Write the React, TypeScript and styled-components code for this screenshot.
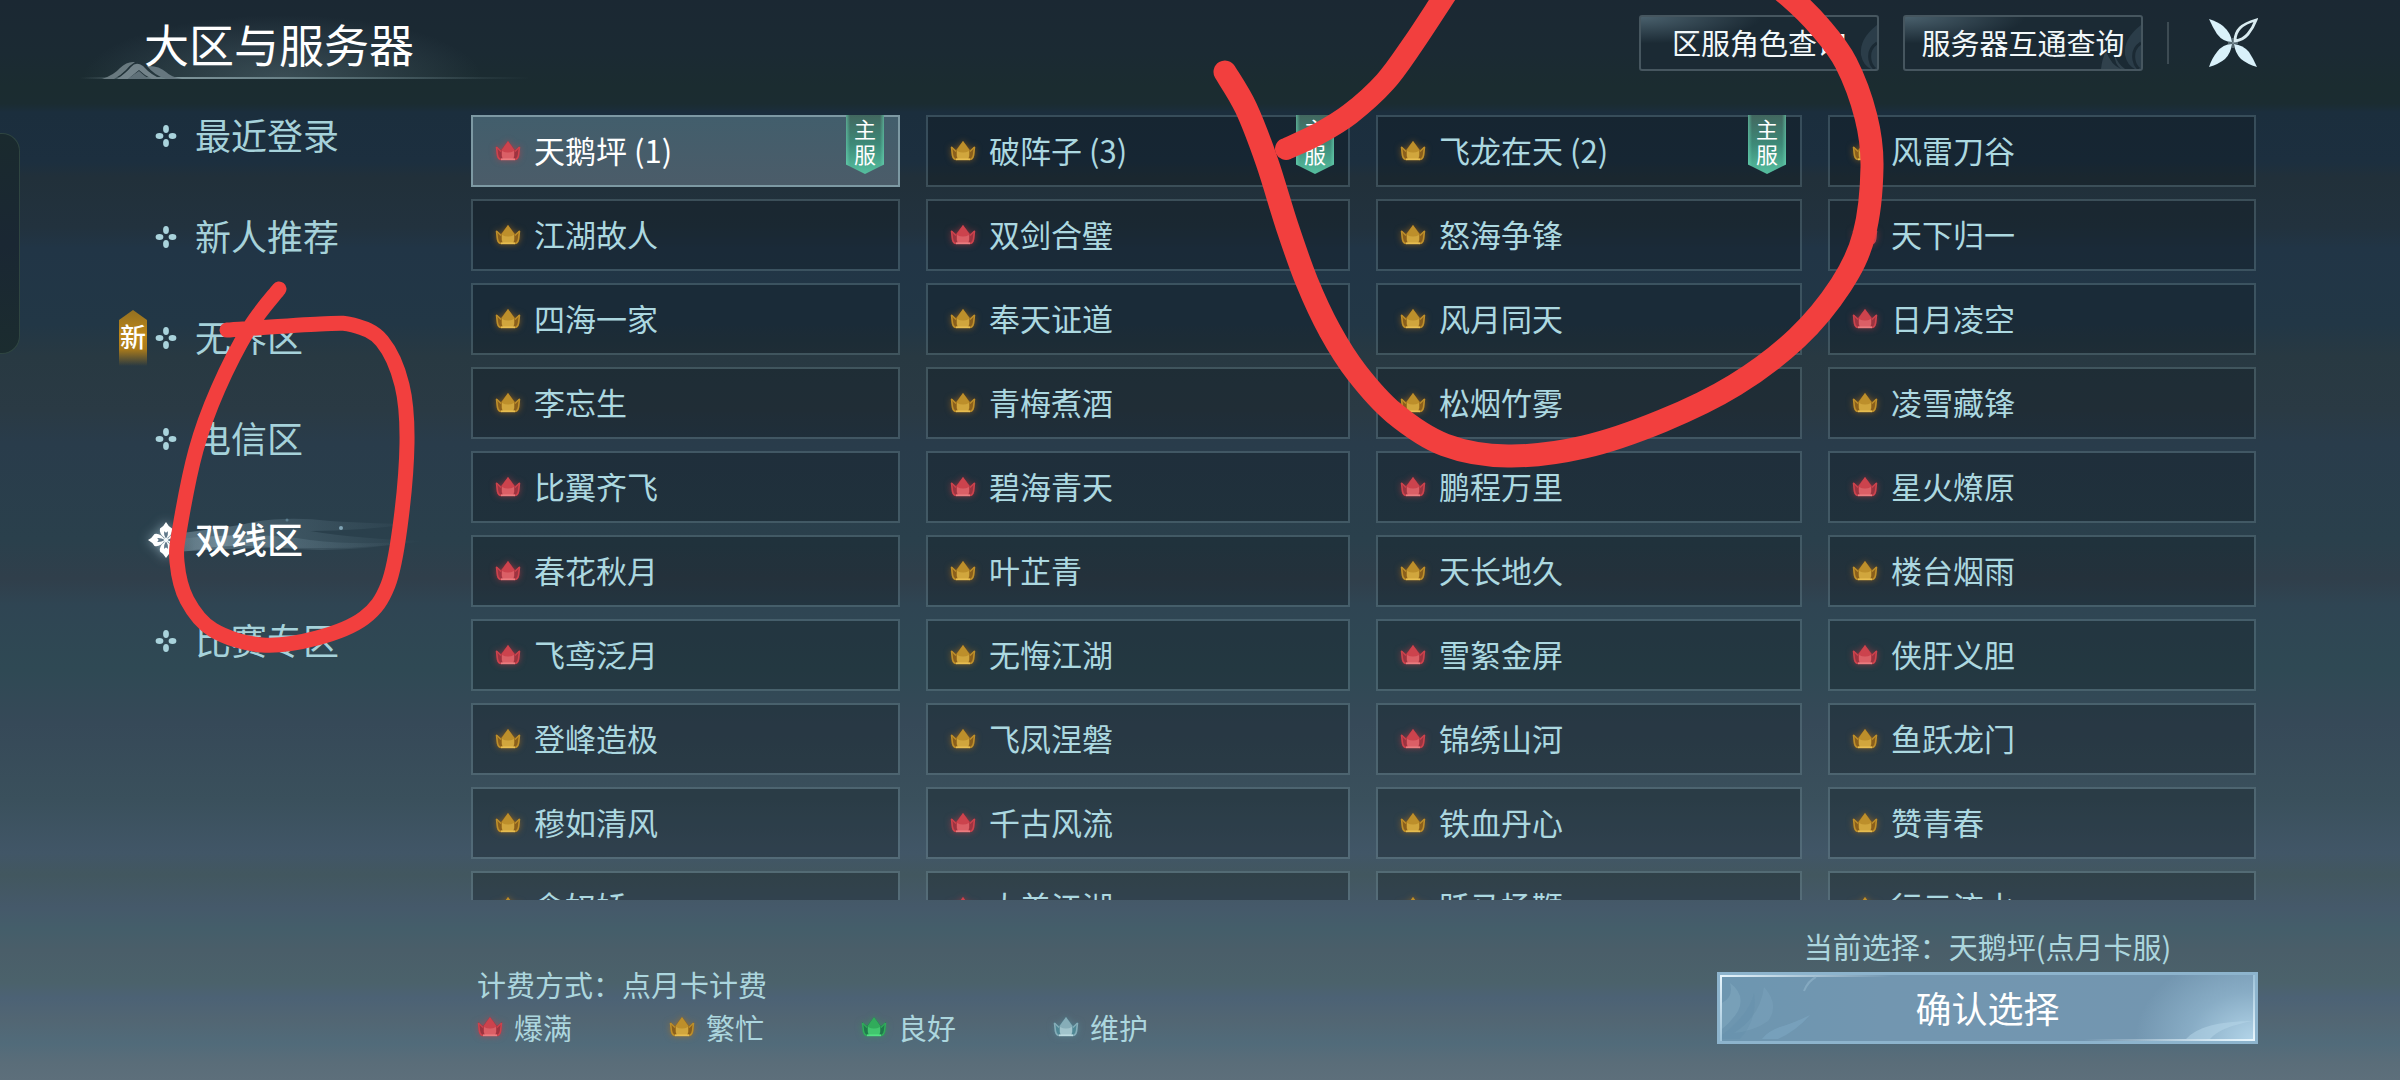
import React, { useState } from 'react';
import styled, { createGlobalStyle, css } from 'styled-components';

const GlobalStyle = createGlobalStyle`
  *, *::before, *::after { box-sizing: border-box; }
  body {
    margin: 0;
    background: #2a3c48;
    font-family: "Noto Sans CJK SC", "Noto Sans", sans-serif;
    color: #acd6de;
  }
  button { font-family: inherit; cursor: pointer; }
`;

const Page = styled.div`
  position: relative;
  display: flex;
  flex-direction: column;
  height: 100vh;
  min-height: 720px;
  overflow: hidden;
  background: linear-gradient(
    180deg,
    #1b2833 0%, #1b2a33 5%, #1b2c30 8%, #1b2c31 9.6%, #1b2e3d 10.4%, #1c2f3f 15%,
    #21303a 16.4%, #22323e 21%, #213546 23%, #223746 30%, #283942 33%, #2a3a44 38%,
    #293c4b 41%, #2a404c 50%, #303f4b 53.6%, #2f4553 56%, #2f4954 62%, #364958 67%,
    #3a505c 74%, #415667 79%, #42575f 81%, #45596a 84%, #445e6a 86%, #4a5e69 88%,
    #4b626b 91%, #4c6275 92.4%, #526673 94.4%, #516b7a 96.6%, #5a6d79 98.4%, #5d6f7b 100%
  );
`;

const Header = styled.header`
  display: flex;
  flex: none;
  justify-content: space-between;
  align-items: flex-start;
  height: 85px;
  padding: 12px 142px 0 80px;
`;

const TitleBlock = styled.div`
  position: relative;
  width: 450px;
  padding: 0 0 3px 64px;
  background:
    linear-gradient(90deg, transparent, rgba(170, 195, 200, 0.65) 22%, rgba(150, 180, 185, 0.4) 55%, transparent) left bottom / 100% 2px no-repeat,
    radial-gradient(200px 64px at 45% 100%, rgba(110, 135, 145, 0.38), transparent);
`;

const Mountains = styled.svg`
  position: absolute;
  left: 22px;
  bottom: 0;
  width: 80px;
  height: 18px;
`;

const Title = styled.h1`
  position: relative;
  margin: 0;
  font-size: 45px;
  line-height: 64px;
  font-weight: 400;
  color: #fff;
  white-space: nowrap;
`;

const Actions = styled.div`
  display: flex;
  align-items: center;
  gap: 24px;
  padding-top: 3px;
`;

const QueryButton = styled.button`
  position: relative;
  width: 240px;
  height: 56px;
  padding: 0 0 3px;
  border: 2px solid #46565f;
  border-radius: 3px;
  background:
    radial-gradient(ellipse at 0 0, rgba(120, 150, 165, 0.5), transparent 36%),
    #1b2a34;
  color: #f2f8fa;
  font-size: 29px;
  line-height: 44px;
  white-space: nowrap;
`;

const ButtonLabel = styled.span`
  position: relative;
`;

const CornerWaves = styled.svg`
  position: absolute;
  right: 0;
  bottom: 0;
  width: 40px;
  height: 52px;
`;

const Divider = styled.span`
  width: 2px;
  height: 42px;
  background: #3d4b53;
`;

const CloseButton = styled.button`
  display: block;
  width: 50px;
  height: 50px;
  margin-left: 15px;
  padding: 0;
  border: 0;
  background: none;
  svg { display: block; width: 50px; height: 50px; }
`;

const Body = styled.div`
  display: flex;
  flex: 1;
  min-height: 0;
`;

const Sidebar = styled.nav`
  flex: none;
  width: 471px;
`;

const RegionButton = styled.button<{ $active: boolean }>`
  position: relative;
  display: flex;
  align-items: center;
  gap: 11px;
  width: 100%;
  height: 101px;
  padding: 0 0 0 148px;
  border: 0;
  background: none;
  color: ${(p) => (p.$active ? '#ffffff' : '#a6d2da')};
  font-size: 36px;
  line-height: 52px;
  font-weight: ${(p) => (p.$active ? 500 : 400)};
  white-space: nowrap;
`;

const FlowerSlot = styled.span<{ $active: boolean }>`
  position: relative;
  display: flex;
  justify-content: center;
  width: 36px;
  svg {
    display: block;
    width: ${(p) => (p.$active ? 36 : 22)}px;
    height: ${(p) => (p.$active ? 36 : 22)}px;
    overflow: visible;
  }
  ${(p) => p.$active && css`filter: drop-shadow(0 0 6px rgba(190, 220, 235, 0.6));`}
`;

const Swoosh = styled.svg`
  position: absolute;
  left: 140px;
  top: 24px;
  width: 285px;
  height: 56px;
`;

const NewTag = styled.span`
  position: absolute;
  left: 119px;
  top: 23px;
  width: 28px;
  height: 56px;
  padding-top: 8px;
  color: #fff;
  font-size: 26px;
  line-height: 36px;
  font-weight: 500;
  text-align: center;
  &::before {
    content: "";
    position: absolute;
    inset: 0;
    z-index: -1;
    clip-path: polygon(50% 0, 100% 18%, 100% 100%, 0 100%, 0 18%);
    background: linear-gradient(180deg, #937022, #bd8719 45%, #a97a1b 70%, rgba(150, 110, 30, 0));
  }
  isolation: isolate;
`;

const RegionName = styled.span`
  position: relative;
  padding-bottom: 4px;
`;

const ServerList = styled.main`
  display: grid;
  flex: 1;
  grid-template-columns: 429fr 424fr 426fr 428fr;
  grid-auto-rows: 72px;
  gap: 12px 26px;
  margin-right: 144px;
  padding-top: 30px;
  overflow: hidden;
`;

const ServerCard = styled.button<{ $selected: boolean }>`
  position: relative;
  display: flex;
  align-items: center;
  gap: 13px;
  min-width: 0;
  padding: 0 0 0 22px;
  border: 2px solid ${(p) => (p.$selected ? '#7d99a3' : 'rgba(135, 165, 175, 0.26)')};
  background: ${(p) => (p.$selected ? 'linear-gradient(180deg, #425e6c, #4b5c69)' : 'rgba(12, 22, 27, 0.33)')};
  background-clip: padding-box;
  color: ${(p) => (p.$selected ? '#ffffff' : '#acd8e0')};
  font-size: 31px;
  line-height: 44px;
  text-align: left;
  white-space: nowrap;
`;

const ServerName = styled.span`
  padding-bottom: 3px;
`;

const MainTag = styled.span`
  position: absolute;
  right: 14px;
  top: -2px;
  width: 38px;
  height: 59px;
  padding: 1px 8px 0;
  isolation: isolate;
  color: #fff;
  font-size: 22px;
  line-height: 25px;
  white-space: normal;
  &::before {
    content: "";
    position: absolute;
    inset: 0;
    z-index: -1;
    clip-path: polygon(0 0, 100% 0, 100% 84%, 50% 100%, 0 84%);
    background:
      linear-gradient(90deg, rgba(110, 220, 185, 0.55), transparent 4px calc(100% - 4px), rgba(110, 220, 185, 0.55)),
      linear-gradient(180deg, #42675f, #3d8a78 50%, #56bf9f);
  }
`;

const CrownSvg = styled.svg<{ $glow: string }>`
  display: block;
  flex: none;
  width: 26px;
  height: 20px;
  overflow: visible;
  filter: drop-shadow(0 0 3px ${(p) => p.$glow});
`;

const Footer = styled.footer`
  display: flex;
  flex: none;
  justify-content: space-between;
  align-items: flex-end;
  height: 180px;
  padding: 0 142px 36px 477px;
  font-size: 29px;
  line-height: 32px;
`;

const Billing = styled.div`
  display: flex;
  flex-direction: column;
  gap: 11px;
  padding-bottom: 1px;
`;

const Plain = styled.p`
  margin: 0;
  white-space: nowrap;
`;

const Legend = styled.ul`
  display: grid;
  grid-template-columns: repeat(4, 192px);
  margin: 0;
  padding: 0;
  list-style: none;
`;

const LegendItem = styled.li`
  display: flex;
  align-items: center;
  gap: 11px;
`;

const Confirm = styled.div`
  display: flex;
  flex-direction: column;
  align-items: center;
  gap: 10px;
`;

const ConfirmButton = styled.button`
  position: relative;
  width: 541px;
  height: 72px;
  padding: 0 0 3px;
  border: 3px solid #8db4cd;
  background:
    linear-gradient(90deg, #e8f6fd, transparent 32%) left top / 100% 2px no-repeat,
    linear-gradient(270deg, #e8f6fd, transparent 32%) left bottom / 100% 2px no-repeat,
    linear-gradient(180deg, #e8f6fd, #9ec3d9) left top / 2px 100% no-repeat,
    linear-gradient(0deg, #e8f6fd, #9ec3d9) right top / 2px 100% no-repeat,
    radial-gradient(120px 90px at 100% 100%, #b4d6ea, rgba(150, 187, 211, 0.6) 55%, transparent),
    linear-gradient(90deg, #6d96b0, #7296b0 30%, #7396b0);
  color: #fff;
  font-size: 36px;
  line-height: 60px;
`;

const ConfirmArt = styled.svg`
  position: absolute;
  left: 0;
  top: 0;
  width: 100%;
  height: 100%;
`;

const EdgePanel = styled.div`
  position: absolute;
  left: 0;
  top: 133px;
  width: 20px;
  height: 221px;
  border: 1px solid #2f4541;
  border-left: 0;
  border-radius: 0 18px 18px 0;
  background: linear-gradient(180deg, #1a2a2e, #1a2733 50%, #1b2c2f);
`;

const MarkerLayer = styled.svg`
  position: absolute;
  left: 0;
  top: 0;
  width: 100%;
  height: 100%;
  pointer-events: none;
`;

type Load = 'full' | 'busy' | 'good' | 'down';

const LOAD_COLORS: Record<Load, { dark: string; mid: string; light: string; glow: string }> = {
  full: { dark: '#9c3440', mid: '#cc434d', light: '#ea7c7f', glow: 'rgba(205, 60, 70, 0.55)' },
  busy: { dark: '#8a5f1c', mid: '#bd8f2b', light: '#e6bd50', glow: 'rgba(180, 115, 25, 0.6)' },
  good: { dark: '#20794c', mid: '#31ab5b', light: '#52e182', glow: 'rgba(45, 160, 90, 0.55)' },
  down: { dark: '#4f8794', mid: '#86adb8', light: '#bcdbe0', glow: 'rgba(90, 150, 165, 0.5)' },
};

function Crown({ load }: { load: Load }) {
  const c = LOAD_COLORS[load];
  return (
    <CrownSvg viewBox="0 0 26 20" $glow={c.glow} aria-hidden="true">
      <path d="M1 5L2 15Q3 19 6 19H20Q23 19 24 15L25 5L20 9L13 0L6 9Z" fill={c.dark} />
      <path d="M13 0L19.500 9Q20 15 18 19H8Q6 15 6.500 9Z" fill={c.mid} />
      <path d="M7 10Q13 13 19 10Q19.500 15 18 19H8Q6.500 15 7 10Z" fill={c.light} opacity="0.5" />
      <path d="M1.500 6L2.500 14.500Q3.500 18.500 6.500 18.500M24.500 6L23.500 14.500Q22.500 18.500 19.500 18.500" fill="none" stroke={c.mid} strokeWidth="1.600" />
      <path d="M1.500 6L6 10.500M24.500 6L20 10.500" fill="none" stroke={c.mid} strokeWidth="1.200" />
      <path d="M6 18.300H20" stroke={c.light} strokeWidth="1.800" />
    </CrownSvg>
  );
}

function Flower({ active }: { active: boolean }) {
  if (!active) {
    return (
      <svg viewBox="0 0 22 22" aria-hidden="true" fill="#a9d3dc">
        <ellipse cx="11" cy="4" rx="2.900" ry="3.900" />
        <ellipse cx="11" cy="18" rx="2.900" ry="3.900" />
        <ellipse cx="4.500" cy="11" rx="3.900" ry="2.900" />
        <ellipse cx="17.500" cy="11" rx="3.900" ry="2.900" />
      </svg>
    );
  }
  return (
    <svg viewBox="0 0 36 36" aria-hidden="true">
      {[0, 90, 180, 270].map((turn) => (
        <g key={turn} transform={`rotate(${turn} 18 18)`}>
          <path d="M18 0Q20 4 24 6.500Q25.500 12 18 17Q10.500 12 12 6.500Q16 4 18 0Z" fill="#fff" />
          <path d="M16 9Q18 12 20 9Q20.500 13 18 17Q15.500 13 16 9Z" fill="#60788a" />
        </g>
      ))}
      <circle cx="18" cy="18" r="2.200" fill="#f2f8fb" />
    </svg>
  );
}

/** Turns a list of points into a smooth Catmull-Rom curve. */
function smoothPath(points: number[][]): string {
  let d = `M${points[0][0]} ${points[0][1]}`;
  for (let i = 0; i < points.length - 1; i += 1) {
    const p0 = points[i - 1] ?? points[i];
    const p1 = points[i];
    const p2 = points[i + 1];
    const p3 = points[i + 2] ?? p2;
    d += `C${p1[0] + (p2[0] - p0[0]) / 6} ${p1[1] + (p2[1] - p0[1]) / 6} ${p2[0] - (p3[0] - p1[0]) / 6} ${p2[1] - (p3[1] - p1[1]) / 6} ${p2[0]} ${p2[1]}`;
  }
  return d;
}

const REGION_LOOP = smoothPath([
  [279, 289], [250, 327], [218, 389], [196, 450], [180, 527], [177, 562], [187, 600],
  [213, 630], [262, 645], [317, 638], [364, 618], [388, 585], [400, 527], [407, 443],
  [402, 385], [382, 341], [353, 325], [320, 324], [227, 330],
]);

const SERVER_LOOP = smoothPath([
  [1225, 72], [1246, 108], [1267, 162], [1287, 226], [1307, 282], [1330, 331], [1357, 373],
  [1394, 413], [1445, 445], [1508, 456], [1584, 447], [1662, 421], [1735, 385], [1797, 338],
  [1841, 285], [1864, 235], [1872, 167], [1866, 117], [1846, 63], [1820, 27], [1790, -3], [1750, -34],
]);

const SERVER_TAIL = smoothPath([
  [1464, -34], [1442, 0], [1413, 44], [1385, 82], [1350, 114], [1318, 134], [1286, 149],
]);

const REGIONS = [
  { name: '最近登录' },
  { name: '新人推荐' },
  { name: '无界区', fresh: true },
  { name: '电信区' },
  { name: '双线区' },
  { name: '比赛专区' },
];

type Server = { name: string; load: Load; roles?: number };

const full = (name: string, roles?: number): Server => ({ name, load: 'full', roles });
const busy = (name: string, roles?: number): Server => ({ name, load: 'busy', roles });

const SERVERS: Server[] = [
  full('天鹅坪', 1), busy('破阵子', 3), busy('飞龙在天', 2), busy('风雷刀谷'),
  busy('江湖故人'), full('双剑合璧'), busy('怒海争锋'), full('天下归一'),
  busy('四海一家'), busy('奉天证道'), busy('风月同天'), full('日月凌空'),
  busy('李忘生'), busy('青梅煮酒'), busy('松烟竹雾'), busy('凌雪藏锋'),
  full('比翼齐飞'), full('碧海青天'), full('鹏程万里'), full('星火燎原'),
  full('春花秋月'), busy('叶芷青'), busy('天长地久'), busy('楼台烟雨'),
  full('飞鸢泛月'), busy('无悔江湖'), full('雪絮金屏'), full('侠肝义胆'),
  busy('登峰造极'), busy('飞凤涅磐'), full('锦绣山河'), busy('鱼跃龙门'),
  busy('穆如清风'), full('千古风流'), busy('铁血丹心'), busy('赞青春'),
  busy('念奴娇'), full('大美江湖'), busy('跃马扬鞭'), busy('行云流水'),
];

const LEGEND: { load: Load; label: string }[] = [
  { load: 'full', label: '爆满' },
  { load: 'busy', label: '繁忙' },
  { load: 'good', label: '良好' },
  { load: 'down', label: '维护' },
];

function Query({ label }: { label: string }) {
  return (
    <QueryButton type="button">
      <CornerWaves viewBox="0 0 40 52" aria-hidden="true">
        <path d="M40 8Q22 22 24 38Q26 48 34 52H40Z" fill="#2b3d49" />
        <path d="M40 26Q31 32 33 43Q34 49 38 52" fill="none" stroke="#1b2a34" strokeWidth="3" />
        <path d="M0 52Q1 42 5 34Q10 48 20 52ZM14 38Q16 46 24 52H20Q13 46 14 38Z" fill="#30414c" />
      </CornerWaves>
      <ButtonLabel>{label}</ButtonLabel>
    </QueryButton>
  );
}

export default function App() {
  const [region, setRegion] = useState('双线区');
  const [server, setServer] = useState('天鹅坪');

  return (
    <>
      <GlobalStyle />
      <Page>
        <Header>
          <TitleBlock>
            <Mountains viewBox="0 0 80 18" aria-hidden="true">
              <path d="M0 18Q12 14 18 7Q25 0 33 1Q28 4 24 9Q18 15 12 18Z" fill="#69797f" />
              <path d="M15 18Q24 12 29 6Q34 0 41 5Q50 15 60 18H50Q42 14 37 9Q31 14 26 18Z" fill="#73838a" />
              <path d="M26 18Q32 13 37 10Q42 15 48 18Z" fill="#5f7078" />
              <path d="M45 5Q56 4 64 11Q69 16 80 18H64Q52 14 45 5Z" fill="#66777f" />
            </Mountains>
            <Title>大区与服务器</Title>
          </TitleBlock>
          <Actions>
            <Query label="区服角色查询" />
            <Query label="服务器互通查询" />
            <Divider />
            <CloseButton type="button" aria-label="关闭">
              <svg viewBox="0 0 50 50" aria-hidden="true">
                <path d="M1 1Q10 4 15 8Q23 15 24 24Q15 24 9 16Q5 10 1 1Z" fill="#d9f1fa" />
                <path d="M1 49Q4 40 9 34Q15 26 24 26Q23 35 17 41Q11 46 1 49Z" fill="#d9f1fa" />
                <path d="M49 49Q45 40 41 34Q35 27 26 26Q27 35 33 41Q39 46 49 49Z" fill="#d9f1fa" />
                <path d="M48 2Q37 5 32 10Q27 15 27 23Q35 22 40 16Q45 10 48 2Z" fill="none" stroke="#d9ebf0" strokeWidth="2.800" />
                <path d="M25 20V30M20 25H30" stroke="#8fa5ad" strokeWidth="1" />
              </svg>
            </CloseButton>
          </Actions>
        </Header>

        <Body>
          <Sidebar>
            {REGIONS.map(({ name, fresh }) => {
              const active = name === region;
              return (
                <RegionButton key={name} type="button" $active={active} onClick={() => setRegion(name)}>
                  {active && (
                    <Swoosh viewBox="0 0 285 56" aria-hidden="true">
                      <defs>
                        <linearGradient id="mist" x1="0" x2="1">
                          <stop offset="0" stopColor="#9fbac8" stopOpacity="0" />
                          <stop offset="0.160" stopColor="#9fbac8" stopOpacity="0.400" />
                          <stop offset="0.500" stopColor="#8aa9b8" stopOpacity="0.200" />
                          <stop offset="1" stopColor="#8aa9b8" stopOpacity="0" />
                        </linearGradient>
                      </defs>
                      <path d="M10 24Q60 18 100 12Q140 2 190 8Q240 11 270 11Q220 18 170 18Q220 26 285 28Q230 36 170 35Q90 34 20 40Z" fill="url(#mist)" />
                      <path d="M40 26Q110 18 170 27Q220 33 275 28Q200 42 130 34Q80 30 40 40Z" fill="url(#mist)" />
                      <circle cx="201" cy="15" r="2" fill="#7fa3b5" />
                      <circle cx="147" cy="7" r="1.500" fill="#5c7f90" />
                    </Swoosh>
                  )}
                  {fresh && <NewTag>新</NewTag>}
                  <FlowerSlot $active={active}>
                    <Flower active={active} />
                  </FlowerSlot>
                  <RegionName>{name}</RegionName>
                </RegionButton>
              );
            })}
          </Sidebar>

          <ServerList>
            {SERVERS.map(({ name, load, roles }) => (
              <ServerCard key={name} type="button" $selected={name === server} onClick={() => setServer(name)}>
                <Crown load={load} />
                <ServerName>{roles ? `${name} (${roles})` : name}</ServerName>
                {roles && <MainTag>主服</MainTag>}
              </ServerCard>
            ))}
          </ServerList>
        </Body>

        <Footer>
          <Billing>
            <Plain>计费方式：点月卡计费</Plain>
            <Legend>
              {LEGEND.map(({ load, label }) => (
                <LegendItem key={load}>
                  <Crown load={load} />
                  {label}
                </LegendItem>
              ))}
            </Legend>
          </Billing>
          <Confirm>
            <Plain>当前选择：{server}(点月卡服)</Plain>
            <ConfirmButton type="button">
              <ConfirmArt viewBox="0 0 535 66" preserveAspectRatio="none" aria-hidden="true">
                <path d="M10 8Q26 20 18 36Q12 46 2 54V28Q14 22 10 8Z" fill="#86acc4" opacity="0.450" />
                <path d="M44 12Q60 30 48 46Q34 56 14 58Q40 42 44 12Z" fill="#86acc4" opacity="0.300" />
                <path d="M2 60Q30 38 34 18Q38 44 20 64H2Z" fill="#5f8aa6" opacity="0.250" />
                <path d="M90 40Q74 48 60 52Q48 56 42 64H58Q76 56 90 40Z" fill="#86b4d0" opacity="0.350" />
                <path d="M84 16Q88 6 96 2" stroke="#93b6cb" strokeWidth="2" fill="none" opacity="0.600" />
                <path d="M466 64Q482 46 533 46Q500 52 490 64Z" fill="#b7d7e9" opacity="0.500" />
              </ConfirmArt>
              <ButtonLabel>确认选择</ButtonLabel>
            </ConfirmButton>
          </Confirm>
        </Footer>

        <EdgePanel />
        <MarkerLayer viewBox="0 0 2400 1080" preserveAspectRatio="none" aria-hidden="true" fill="none" stroke="#f23f3e" strokeLinecap="round" strokeLinejoin="round">
          <path d={REGION_LOOP} strokeWidth="15" />
          <path d={SERVER_LOOP} strokeWidth="23" />
          <path d={SERVER_TAIL} strokeWidth="22" />
        </MarkerLayer>
      </Page>
    </>
  );
}
